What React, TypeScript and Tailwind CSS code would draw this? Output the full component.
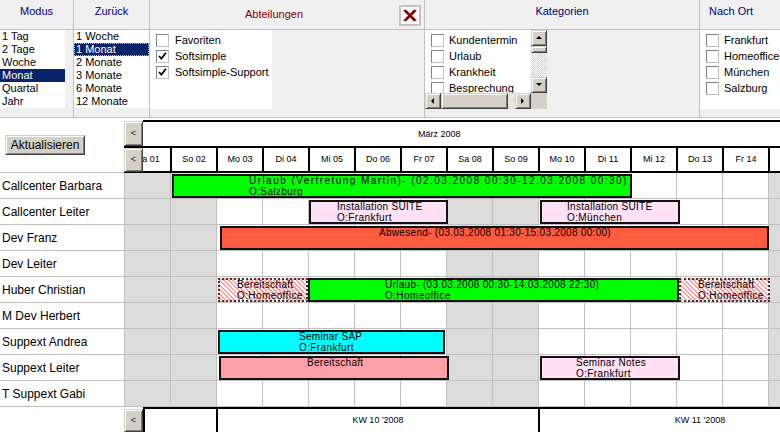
import React from "react";

const days = ["Sa 01","So 02","Mo 03","Di 04","Mi 05","Do 06","Fr 07","Sa 08","So 09","Mo 10","Di 11","Mi 12","Do 13","Fr 14","Sa 15"];
const weekend = new Set([0, 1, 7, 8, 14]);
const names = ["Callcenter Barbara","Callcenter Leiter","Dev Franz","Dev Leiter","Huber Christian","M Dev Herbert","Suppext Andrea","Suppext Leiter","T Suppext Gabi"];

type Line = { t: string; c: string };
type Ev = { row: number; x1: number; x2: number; cls: string; pl: number; lines: Line[] };

const HATCH = "bg-[image:repeating-linear-gradient(45deg,#ff9c9c_0px,#ff9c9c_1.6px,#ffffff_1.6px,#ffffff_3.2px)] border-2 border-dotted border-[#3a3a3a]";
const SOLID = "border-2 border-[#111]";

const events: Ev[] = [
  { row: 0, x1: 172, x2: 632, cls: `bg-[#00ff00] ${SOLID}`, pl: 75, lines: [{ t: "Urlaub (Vertretung Martin)- (02.03.2008 00:30-12.03.2008 00:30)", c: "tracking-[1.45px]" }, { t: "O:Salzburg", c: "tracking-[0.4px]" }] },
  { row: 1, x1: 309, x2: 448, cls: `bg-[#ffe1f5] ${SOLID}`, pl: 26, lines: [{ t: "Installation SUITE", c: "tracking-[0.3px]" }, { t: "O:Frankfurt", c: "tracking-[0.4px]" }] },
  { row: 1, x1: 540, x2: 680, cls: `bg-[#ffe1f5] ${SOLID}`, pl: 25, lines: [{ t: "Installation SUITE", c: "tracking-[0.3px]" }, { t: "O:München", c: "tracking-[0.4px]" }] },
  { row: 2, x1: 220, x2: 769, cls: `bg-[#ff5b3f] ${SOLID}`, pl: 157, lines: [{ t: "Abwesend- (03.03.2008 01:30-15.03.2008 00:00)", c: "tracking-[0.3px]" }] },
  { row: 4, x1: 218, x2: 308, cls: HATCH, pl: 17, lines: [{ t: "Bereitschaft", c: "tracking-[0.3px]" }, { t: "O:Homeoffice", c: "tracking-[0.4px]" }] },
  { row: 4, x1: 308, x2: 679, cls: `bg-[#00ff00] ${SOLID}`, pl: 75, lines: [{ t: "Urlaub- (03.03.2008 00:30-14.03.2008 22:30)", c: "tracking-[0.3px]" }, { t: "O:Homeoffice", c: "tracking-[0.4px]" }] },
  { row: 4, x1: 679, x2: 770, cls: HATCH, pl: 17, lines: [{ t: "Bereitschaft", c: "tracking-[0.3px]" }, { t: "O:Homeoffice", c: "tracking-[0.4px]" }] },
  { row: 6, x1: 218, x2: 445, cls: `bg-[#00ffff] ${SOLID}`, pl: 79, lines: [{ t: "Seminar SAP", c: "tracking-[0.3px]" }, { t: "O:Frankfurt", c: "tracking-[0.4px]" }] },
  { row: 7, x1: 219, x2: 449, cls: `bg-[#ffa0a9] ${SOLID}`, pl: 86, lines: [{ t: "Bereitschaft", c: "tracking-[0.3px]" }] },
  { row: 7, x1: 540, x2: 680, cls: `bg-[#ffe1f5] ${SOLID}`, pl: 34, lines: [{ t: "Seminar Notes", c: "tracking-[0.3px]" }, { t: "O:Frankfurt", c: "tracking-[0.4px]" }] },
];

const BEVEL = "bg-[#d4d0c8] border border-[#d4d0c8] border-r-[#404040] border-b-[#404040] shadow-[inset_1px_1px_0_#ffffff,inset_-1px_-1px_0_#808080]";

function Check({ checked }: { checked?: boolean }) {
  return (
    <span className="w-[13px] h-[13px] shrink-0 bg-white border border-[#808080] border-r-[#c0c0c0] border-b-[#c0c0c0] flex items-center justify-center">
      {checked && (
        <svg width="9" height="9" viewBox="0 0 9 9">
          <path d="M1 4 L3.3 6.6 L8 0.8" stroke="#000" strokeWidth="1.7" fill="none" />
        </svg>
      )}
    </span>
  );
}

function CheckRow({ label, checked, gap }: { label: string; checked?: boolean; gap: string }) {
  return (
    <div className={`h-[16px] flex items-center ${gap} text-[11px] leading-[13px] whitespace-nowrap`}>
      <Check checked={checked} />
      <span>{label}</span>
    </div>
  );
}

function Arrow({ dir }: { dir: "up" | "down" | "left" | "right" }) {
  const pts = {
    up: "1,5 4,2 7,5",
    down: "1,2 4,5 7,2",
    left: "5,1 2,4 5,7",
    right: "2,1 5,4 2,7",
  }[dir];
  return (
    <svg width="8" height="8" viewBox="0 0 8 8">
      <polygon points={pts} fill="#000" />
    </svg>
  );
}

function SBtn({ dir }: { dir: "up" | "down" | "left" | "right" }) {
  return (
    <div className={`w-[16px] h-[16px] shrink-0 flex items-center justify-center ${BEVEL}`}>
      <Arrow dir={dir} />
    </div>
  );
}

function LtBtn({ cls }: { cls: string }) {
  return (
    <div className={`w-[19px] flex items-center justify-center text-[9px] text-[#222] ${BEVEL} ${cls}`}>&lt;</div>
  );
}

export default function App() {
  return (
    <div className="w-[780px] h-[432px] overflow-hidden bg-white relative font-['Liberation_Sans',Arial,sans-serif] text-black">
      {/* Top filter panel */}
      <div className="h-[118px] bg-[#f0f0f0] border-b border-[#c0c0c0] flex">
        {/* Modus */}
        <div className="w-[74px] shrink-0 border-r border-[#c0c0c0] flex flex-col">
          <div className="h-[30px] border-b border-[#c0c0c0] pt-[4px] text-center text-[11px] leading-[14px] text-[#000080]">Modus</div>
          <div className="w-[65px] h-[78px] bg-white text-[11px]">
            {["1 Tag", "2 Tage", "Woche", "Monat", "Quartal", "Jahr"].map((m) => (
              <div key={m} className={`h-[13px] leading-[13px] pl-[2px] ${m === "Monat" ? "bg-[#0a246a] text-white" : ""}`}>{m}</div>
            ))}
          </div>
        </div>
        {/* Zurück */}
        <div className="w-[76px] shrink-0 border-r border-[#c0c0c0] flex flex-col">
          <div className="h-[30px] border-b border-[#c0c0c0] pt-[4px] text-center text-[11px] leading-[14px] text-[#000080]">Zurück</div>
          <div className="w-full h-[78px] bg-white text-[11px]">
            {["1 Woche", "1 Monat", "2 Monate", "3 Monate", "6 Monate", "12 Monate"].map((m) => (
              <div key={m} className={`h-[13px] leading-[13px] pl-[2px] ${m === "1 Monat" ? "bg-[#0a246a] text-white outline outline-1 outline-dotted outline-[#d8c070] -outline-offset-1" : ""}`}>{m}</div>
            ))}
          </div>
        </div>
        {/* Abteilungen */}
        <div className="w-[275px] shrink-0 border-r border-[#c0c0c0] flex flex-col">
          <div className="h-[30px] border-b border-[#c0c0c0] flex">
            <div className="w-[248px] pt-[7px] text-center text-[11px] leading-[14px] text-[#800000]">Abteilungen</div>
            <div className="ml-[1px] mt-[5px] w-[22px] h-[21px] border-2 border-[#c4c4c4] bg-white flex items-center justify-center">
              <svg width="14" height="13" viewBox="0 0 14 13">
                <path d="M2 1.5 L12 11.5 M12 1.5 L2 11.5" stroke="#8b0000" strokeWidth="2.6" />
                <path d="M0.5 1.5 H3.5 M10.5 1.5 H13.5 M0.5 11.5 H3.5 M10.5 11.5 H13.5" stroke="#8b0000" strokeWidth="1" />
              </svg>
            </div>
          </div>
          <div className="w-[122px] h-[79px] bg-white pt-[2px] pl-[6px]">
            <CheckRow label="Favoriten" gap="gap-[6px]" />
            <CheckRow label="Softsimple" checked gap="gap-[6px]" />
            <CheckRow label="Softsimple-Support" checked gap="gap-[6px]" />
          </div>
        </div>
        {/* Kategorien */}
        <div className="w-[275px] shrink-0 border-r border-[#c0c0c0] flex flex-col">
          <div className="h-[30px] border-b border-[#c0c0c0] pt-[4px] text-center text-[11px] leading-[14px] text-[#000080]">Kategorien</div>
          <div className="w-[122px] h-[79px] flex">
            <div className="w-[106px] flex flex-col">
              <div className="h-[63px] bg-white pt-[2px] pl-[6px] overflow-hidden">
                <CheckRow label="Kundentermin" gap="gap-[5px]" />
                <CheckRow label="Urlaub" gap="gap-[5px]" />
                <CheckRow label="Krankheit" gap="gap-[5px]" />
                <CheckRow label="Besprechung" gap="gap-[5px]" />
              </div>
              <div className="h-[16px] flex">
                <SBtn dir="left" />
                <div className={`w-[67px] h-[16px] ${BEVEL}`} />
                <div className="w-[7px] h-[16px] bg-[image:repeating-conic-gradient(#d4d0c8_0%_25%,#ffffff_0%_50%)] bg-[length:2px_2px]" />
                <SBtn dir="right" />
              </div>
            </div>
            <div className="w-[16px] flex flex-col">
              <SBtn dir="up" />
              <div className={`h-[7px] ${BEVEL}`} />
              <div className="h-[24px] bg-[image:repeating-conic-gradient(#d4d0c8_0%_25%,#ffffff_0%_50%)] bg-[length:2px_2px]" />
              <SBtn dir="down" />
              <div className="h-[16px] bg-[#d4d0c8]" />
            </div>
          </div>
        </div>
        {/* Nach Ort */}
        <div className="flex-1 flex flex-col">
          <div className="h-[30px] border-b border-[#c0c0c0] pt-[4px] pl-[9px] text-[11px] leading-[14px] text-[#000080] whitespace-nowrap">Nach Ort</div>
          <div className="w-full h-[79px] bg-white pt-[2px] pl-[6px] overflow-hidden">
            <CheckRow label="Frankfurt" gap="gap-[5px]" />
            <CheckRow label="Homeoffice" gap="gap-[5px]" />
            <CheckRow label="München" gap="gap-[5px]" />
            <CheckRow label="Salzburg" gap="gap-[5px]" />
          </div>
        </div>
      </div>

      {/* Calendar header */}
      <div className="flex h-[55px]">
        <div className="w-[124px] shrink-0 border-b border-[#c0c0c0] pt-[17px] pl-[5px]">
          <div className={`w-[80px] h-[20px] flex items-center justify-center text-[12px] ${BEVEL}`}>Aktualisieren</div>
        </div>
        <div className="flex-1 flex flex-col pt-[2px] overflow-hidden">
          <div className="h-[26px] flex">
            <LtBtn cls="h-[25px] mt-[1px]" />
            <div className="flex-1 border-t-2 border-black bg-white pl-[275px] pt-[6px] text-[9px] leading-[12px] whitespace-nowrap">März 2008</div>
          </div>
          <div className="h-[27px] relative">
            <div className="flex h-[27px] border-t-2 border-b-2 border-black">
              {days.map((d) => (
                <div key={d} className="w-[46px] shrink-0 border-l-2 border-black flex items-center justify-center text-[9px] whitespace-nowrap bg-white">{d}</div>
              ))}
            </div>
            <LtBtn cls="absolute left-0 top-[2px] h-[24px]" />
          </div>
        </div>
      </div>

      {/* Body */}
      <div className="relative h-[234px]">
        {names.map((n) => (
          <div key={n} className="flex h-[26px]">
            <div className="w-[124px] shrink-0 border-b border-[#c0c0c0] pl-[2px] flex items-center text-[12px] whitespace-nowrap">{n}</div>
            {days.map((d, i) => (
              <div key={d} className={`w-[46px] shrink-0 border-l border-b border-[#c0c0c0] ${weekend.has(i) ? "bg-[#dcdcdc]" : "bg-white"}`} />
            ))}
          </div>
        ))}
        {events.map((e, i) => (
          <div
            key={i}
            className={`absolute overflow-hidden text-[10px] leading-[11px] whitespace-nowrap ${e.cls}`}
            style={{ left: e.x1, width: e.x2 - e.x1, top: e.row * 26 + 1, height: 24, paddingLeft: e.pl }}
          >
            <div className="-mt-px">
              {e.lines.map((l, j) => (
                <div key={j} className={l.c}>{l.t}</div>
              ))}
            </div>
          </div>
        ))}
      </div>

      {/* Week row */}
      <div className="flex h-[25px]">
        <div className="w-[124px] shrink-0 bg-white" />
        <LtBtn cls="h-[23px] mt-[2px] shrink-0" />
        <div className="w-[73px] shrink-0 border-t-2 border-l-2 border-black" />
        <div className="w-[322px] shrink-0 border-t-2 border-l-2 border-black flex items-center justify-center text-[9px] whitespace-nowrap">KW 10 '2008</div>
        <div className="w-[322px] shrink-0 border-t-2 border-l-2 border-black flex items-center justify-center text-[9px] whitespace-nowrap">KW 11 '2008</div>
      </div>
    </div>
  );
}
